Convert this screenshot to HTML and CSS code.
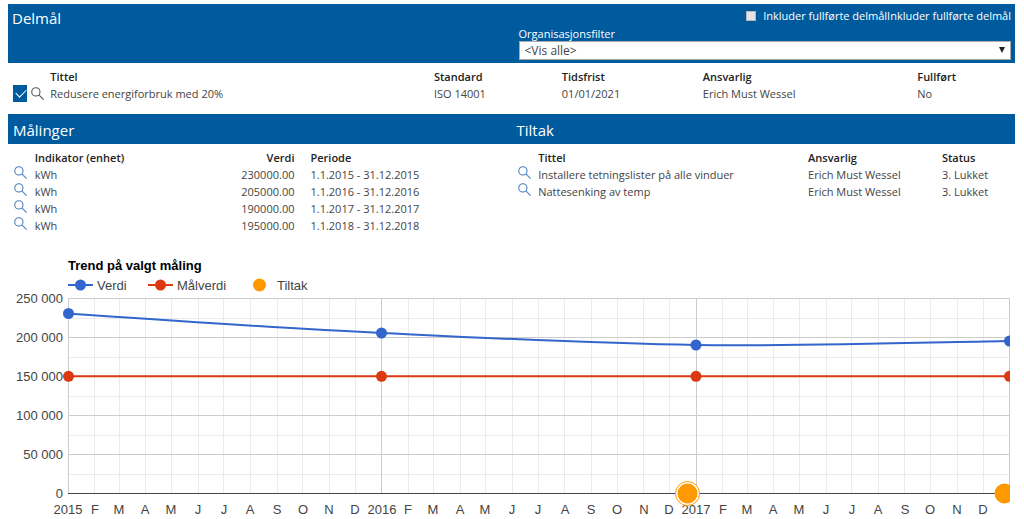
FILE: index.html
```html
<!DOCTYPE html>
<html lang="no">
<head>
<meta charset="utf-8">
<title>Delmål</title>
<link rel="stylesheet" href="styles.css">
</head>
<body>
<svg class="defs" aria-hidden="true">
  <symbol id="lens" viewBox="0 0 12 12"><circle cx="4.5" cy="4.5" r="3.8"/><path d="M7.3 7.3 11.6 11.6"/></symbol>
</svg>
<main>
  <header class="band filter">
    <h1 class="heading">Delmål</h1>
    <div class="controls">
      <label class="include"><input class="include-box" type="checkbox">Inkluder fullførte delmålInkluder fullførte delmål</label>
      <label class="org-label" for="org">Organisasjonsfilter</label>
      <div class="org">
        <select class="org-select" id="org"><option>&lt;Vis alle&gt;</option></select>
        <svg class="org-arrow" viewBox="0 0 6 6" aria-hidden="true"><path d="M0 0H6L3 6Z"/></svg>
      </div>
    </div>
  </header>

  <table class="grid goals">
    <colgroup><col class="g-tools"><col class="g-title"><col class="g-standard"><col class="g-due"><col class="g-owner"><col></colgroup>
    <thead><tr><th></th><th>Tittel</th><th>Standard</th><th>Tidsfrist</th><th>Ansvarlig</th><th>Fullført</th></tr></thead>
    <tbody>
      <tr>
        <td><div class="tools"><input class="pick" type="checkbox" checked aria-label="Velg delmål"><button class="lens dark" aria-label="Vis"><svg><use href="#lens"/></svg></button></div></td>
        <td>Redusere energiforbruk med 20%</td><td>ISO 14001</td><td>01/01/2021</td><td>Erich Must Wessel</td><td>No</td>
      </tr>
    </tbody>
  </table>

  <div class="band split">
    <h2 class="heading">Målinger</h2>
    <h2 class="heading">Tiltak</h2>
  </div>

  <div class="split lists">
    <table class="grid">
      <colgroup><col class="l-tools"><col class="m-name"><col class="m-value"><col></colgroup>
      <thead><tr><th></th><th>Indikator (enhet)</th><th class="num">Verdi</th><th class="period">Periode</th></tr></thead>
      <tbody>
        <tr><td><button class="lens" aria-label="Vis"><svg><use href="#lens"/></svg></button></td><td>kWh</td><td class="num">230000.00</td><td class="period">1.1.2015 - 31.12.2015</td></tr>
        <tr><td><button class="lens" aria-label="Vis"><svg><use href="#lens"/></svg></button></td><td>kWh</td><td class="num">205000.00</td><td class="period">1.1.2016 - 31.12.2016</td></tr>
        <tr><td><button class="lens" aria-label="Vis"><svg><use href="#lens"/></svg></button></td><td>kWh</td><td class="num">190000.00</td><td class="period">1.1.2017 - 31.12.2017</td></tr>
        <tr><td><button class="lens" aria-label="Vis"><svg><use href="#lens"/></svg></button></td><td>kWh</td><td class="num">195000.00</td><td class="period">1.1.2018 - 31.12.2018</td></tr>
      </tbody>
    </table>
    <table class="grid">
      <colgroup><col class="l-tools"><col class="a-title"><col class="a-owner"><col></colgroup>
      <thead><tr><th></th><th>Tittel</th><th>Ansvarlig</th><th>Status</th></tr></thead>
      <tbody>
        <tr><td><button class="lens" aria-label="Vis"><svg><use href="#lens"/></svg></button></td><td>Installere tetningslister på alle vinduer</td><td>Erich Must Wessel</td><td>3. Lukket</td></tr>
        <tr><td><button class="lens" aria-label="Vis"><svg><use href="#lens"/></svg></button></td><td>Nattesenking av temp</td><td>Erich Must Wessel</td><td>3. Lukket</td></tr>
      </tbody>
    </table>
  </div>

  <svg class="chart" viewBox="0 0 1007 267" role="img" aria-label="Trend på valgt måling">
    <clipPath id="plot"><rect x="0" y="0" width="1002" height="267"/></clipPath>
    <text class="chart-title" x="60" y="18">Trend på valgt måling</text>
    <g class="line-blue"><path d="M60 33H85"/><circle cx="72.500" cy="33" r="5.500"/></g>
    <text x="89" y="38">Verdi</text>
    <g class="line-red"><path d="M140 33H165"/><circle cx="152.500" cy="33" r="5.500"/></g>
    <text x="169" y="38">Målverdi</text>
    <circle class="dot" cx="251.500" cy="33" r="6.500"/>
    <text x="269" y="38">Tiltak</text>

    <path class="minor" d="M60 66.500H1001M60 105.500H1001M60 144.500H1001M60 183.500H1001M60 222.500H1001
      M86.500 46V241M111.500 46V241M137.500 46V241M163.500 46V241M190.500 46V241M215.500 46V241M242.500 46V241M269.500 46V241M294.500 46V241M321.500 46V241M347.500 46V241
      M400.500 46V241M425.500 46V241M452.500 46V241M477.500 46V241M504.500 46V241M530.500 46V241M556.500 46V241M583.500 46V241M609.500 46V241M635.500 46V241M661.500 46V241
      M714.500 46V241M739.500 46V241M765.500 46V241M791.500 46V241M818.500 46V241M843.500 46V241M870.500 46V241M896.500 46V241M922.500 46V241M949.500 46V241M975.500 46V241"/>
    <path class="major" d="M60 46.500H1002M60 85.500H1002M60 124.500H1002M60 163.500H1002M60 202.500H1002M60.500 46V241M373.500 46V241M688.500 46V241M1001.500 46V241"/>
    <path class="axis" d="M60 241.500H1002"/>

    <g class="y-labels">
      <text x="55" y="51">250 000</text><text x="55" y="90">200 000</text><text x="55" y="129">150 000</text>
      <text x="55" y="168">100 000</text><text x="55" y="207">50 000</text><text x="55" y="246">0</text>
    </g>
    <g class="x-labels">
      <text x="60" y="262">2015</text><text x="87" y="262">F</text><text x="111" y="262">M</text><text x="137" y="262">A</text><text x="163" y="262">M</text><text x="190" y="262">J</text><text x="216" y="262">J</text><text x="242" y="262">A</text><text x="269" y="262">S</text><text x="295" y="262">O</text><text x="321" y="262">N</text><text x="347" y="262">D</text>
      <text x="374" y="262">2016</text><text x="400" y="262">F</text><text x="425" y="262">M</text><text x="452" y="262">A</text><text x="477" y="262">M</text><text x="504" y="262">J</text><text x="530" y="262">J</text><text x="557" y="262">A</text><text x="583" y="262">S</text><text x="609" y="262">O</text><text x="636" y="262">N</text><text x="661" y="262">D</text>
      <text x="688" y="262">2017</text><text x="715" y="262">F</text><text x="739" y="262">M</text><text x="765" y="262">A</text><text x="791" y="262">M</text><text x="818" y="262">J</text><text x="844" y="262">J</text><text x="870" y="262">A</text><text x="897" y="262">S</text><text x="922" y="262">O</text><text x="949" y="262">N</text><text x="975" y="262">D</text>
    </g>

    <g clip-path="url(#plot)">
      <g class="line-blue">
        <path d="M60.500 61.500C126 66 269 76 373.500 81C478 86 584 91.500 688.500 93C793 94.500 936 90 1001.500 89"/>
        <circle cx="60.500" cy="61.500" r="5.500"/><circle cx="373.500" cy="81" r="5.500"/><circle cx="688" cy="93" r="5.500"/><circle cx="1001.500" cy="89" r="5.500"/>
      </g>
      <g class="line-red">
        <path d="M60.500 124.300H1001.500"/>
        <circle cx="60.500" cy="124.300" r="5.500"/><circle cx="373.500" cy="124.300" r="5.500"/><circle cx="688" cy="124.300" r="5.500"/><circle cx="1001.500" cy="124.300" r="5.500"/>
      </g>
      <circle class="ring" cx="679.500" cy="241.500" r="12"/>
      <circle class="dot" cx="679.500" cy="241.500" r="10"/>
      <circle class="dot" cx="996.500" cy="241.500" r="10"/>
    </g>
  </svg>
</main>
</body>
</html>
```
FILE: styles.css
```css
* {
  box-sizing: border-box;
}

body {
  margin: 4px 9px 0 8px;
  background: #fff;
  color: #444;
  font: 11px/17px "Open Sans", "Noto Sans", sans-serif;
}

.defs {
  position: absolute;
  width: 0;
  height: 0;
}

.band {
  background: #005a9e;
  color: #fff;
}

.heading {
  margin: 0;
  font-size: 15px;
  font-weight: 400;
  line-height: 20px;
}

.filter {
  display: grid;
  grid-template-columns: 1fr 1fr;
  padding: 4px 4px 3px;
}

.controls {
  display: flex;
  flex-direction: column;
  padding-left: 7px;
}

.include {
  display: flex;
  align-items: center;
  align-self: flex-end;
  gap: 7px;
  line-height: 16px;
  white-space: nowrap;
}

.include-box {
  appearance: none;
  width: 10px;
  height: 10px;
  margin: 0;
  background: #e4e4e4;
  border: 1px solid #b5b5b5;
}

.org-label {
  padding-top: 3px;
  line-height: 14px;
}

.org {
  position: relative;
}

.org-select {
  display: block;
  appearance: none;
  width: 100%;
  height: 19px;
  padding: 0 5px;
  border: 1px solid #ababab;
  border-radius: 0;
  background: #fff;
  color: #444;
  font: 12px/17px "Open Sans", "Noto Sans", sans-serif;
}

.org-arrow {
  position: absolute;
  top: 6px;
  right: 6px;
  width: 6px;
  height: 6px;
  fill: #222;
}

.grid {
  width: 100%;
  border-collapse: collapse;
  table-layout: fixed;
}

.grid th,
.grid td {
  height: 17px;
  padding: 0;
  text-align: left;
  white-space: nowrap;
}

.grid th {
  color: #222;
  font-weight: 600;
}

.grid .num {
  text-align: right;
}

.grid .period {
  padding-left: 16px;
}

.goals {
  margin: 5px 0 12px;
}

.g-tools { width: 4.2%; }
.g-title { width: 38.1%; }
.g-standard { width: 12.7%; }
.g-due { width: 14%; }
.g-owner { width: 21.3%; }
.l-tools { width: 5.3%; }
.m-name { width: 34%; }
.m-value { width: 17.6%; }
.a-title { width: 53.6%; }
.a-owner { width: 26.6%; }

.tools {
  display: flex;
  align-items: center;
  gap: 4px;
  padding-left: 5px;
}

.pick {
  appearance: none;
  position: relative;
  width: 14px;
  height: 17px;
  margin: 0;
  background: #005a9e;
}

.pick:checked::after {
  content: "";
  position: absolute;
  top: 4px;
  left: 3px;
  width: 9px;
  height: 5px;
  border: solid #fff;
  border-width: 0 0 1px 1px;
  transform: rotate(-45deg);
}

.lens {
  display: block;
  margin: 0 0 4px 6px;
  padding: 0;
  border: 0;
  background: none;
}

.lens svg {
  display: block;
  width: 13px;
  height: 13px;
  fill: none;
  stroke: #4a7fc0;
}

.lens.dark {
  margin: 0;
}

.lens.dark svg {
  stroke: #555;
}

.split {
  display: grid;
  grid-template-columns: 1fr 1fr;
}

.band.split .heading {
  padding: 6px 5px 4px;
}

.lists {
  align-items: start;
  padding: 5px 0 18px;
}

.chart {
  display: block;
  width: 100%;
  font: 13px "Liberation Sans", Arial, sans-serif;
  fill: #444;
}

.chart-title {
  font-weight: 700;
  fill: #000;
}

.y-labels {
  text-anchor: end;
}

.x-labels {
  text-anchor: middle;
}

.minor {
  stroke: #ebebeb;
}

.major {
  stroke: #ccc;
}

.axis {
  stroke: #444;
}

.line-blue path,
.line-red path {
  fill: none;
  stroke-width: 2;
}

.line-blue {
  fill: #3366cc;
  stroke: #3366cc;
}

.line-red {
  fill: #dc3912;
  stroke: #dc3912;
}

.line-blue circle,
.line-red circle {
  stroke: none;
}

.dot {
  fill: #ff9900;
}

.ring {
  fill: #fff;
  stroke: #ff9900;
}
```
